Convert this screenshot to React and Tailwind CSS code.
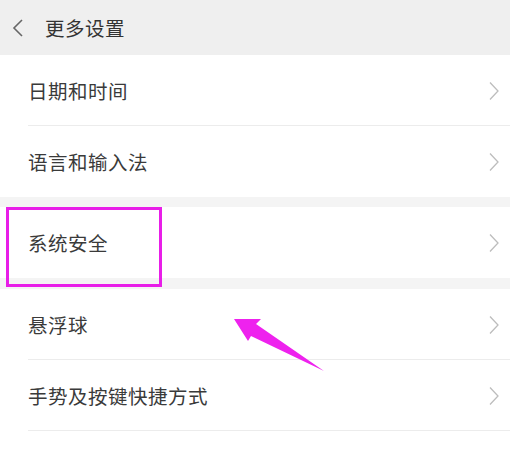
const Chevron = () => (
  <svg width="10" height="20" viewBox="0 0 10 20" className="shrink-0">
    <path d="M1 1.5 L9 10 L1 18.5" fill="none" stroke="#bdbdbd" strokeWidth="1.3" />
  </svg>
);

const Row = ({ label, divider }) => (
  <div className="h-[71px] flex items-center pl-7 pr-[11px] relative">
    <span className="flex-1 text-[19.5px] text-[#3a3a3a] tracking-[0.5px]">{label}</span>
    <Chevron />
    {divider && <div className="absolute left-7 right-0 bottom-0 h-px bg-[#ececec]" />}
  </div>
);

export default function App() {
  return (
    <div
      className="w-[510px] h-[457px] bg-white overflow-hidden relative"
      style={{ fontFamily: '"Noto Sans CJK SC", "Noto Sans", sans-serif' }}
    >
      <div className="h-[55px] bg-[#efefef] flex items-center pl-3">
        <svg width="12" height="20" viewBox="0 0 12 20">
          <path d="M10 2 L2 10 L10 18" fill="none" stroke="#666" strokeWidth="1.6" />
        </svg>
        <span className="ml-[21px] text-[19.5px] text-[#333] tracking-[0.5px]">更多设置</span>
      </div>

      <Row label="日期和时间" divider />
      <Row label="语言和输入法" />
      <div className="h-[10px] bg-[#f4f4f4]" />
      <Row label="系统安全" />
      <div className="h-[11px] bg-[#f4f4f4]" />
      <Row label="悬浮球" divider />
      <Row label="手势及按键快捷方式" divider />

      {/* annotation box */}
      <div className="absolute left-[6px] top-[207px] w-[156px] h-[80px] border-[3px] border-[#e81ee8]" />

      {/* annotation arrow */}
      <svg className="absolute left-0 top-0" width="510" height="457" viewBox="0 0 510 457">
        <polygon points="234,319 261,319 256,324 324,371 251,336 248,341" fill="#ee22ee" />
      </svg>
    </div>
  );
}
